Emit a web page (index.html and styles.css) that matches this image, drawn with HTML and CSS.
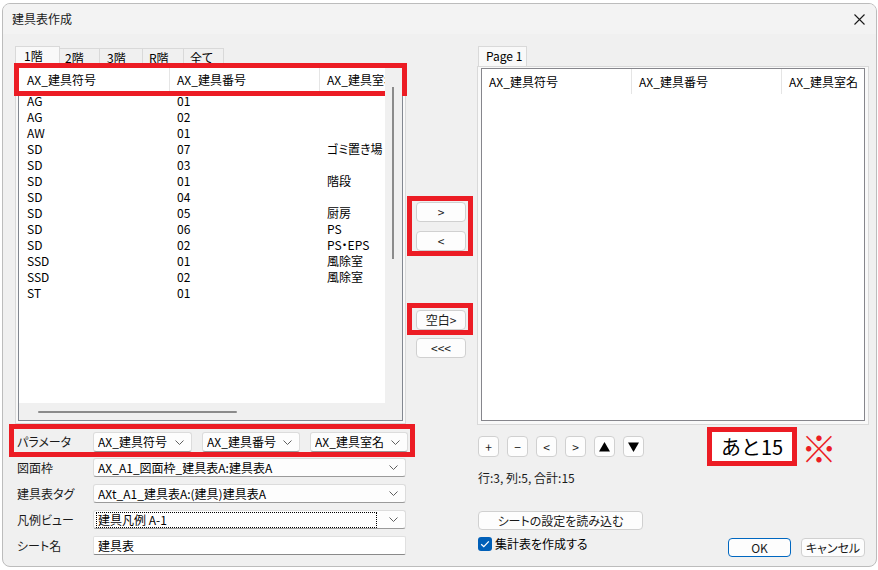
FILE: index.html
```html
<!DOCTYPE html>
<html lang="ja">
<head>
<meta charset="utf-8">
<title>建具表作成</title>
<link rel="stylesheet" href="styles.css">
</head>
<body>
<div class="dialog">
  <div class="titlebar">
    <span class="title">建具表作成</span>
    <svg class="close" width="11" height="11" viewBox="0 0 11 11"><path d="M0.5 0.5L10.5 10.5M10.5 0.5L0.5 10.5" stroke="#1a1a1a" stroke-width="1.1" fill="none"/></svg>
  </div>
  <div class="main">
    <div class="leftcol">
      <div class="tabs">
        <div class="tab active t1">1階</div>
        <div class="tab t2">2階</div>
        <div class="tab t3">3階</div>
        <div class="tab t4">R階</div>
        <div class="tab t5">全て</div>
      </div>
      <div class="panel lpanel">
        <div class="list llist">
          <div class="lhead">
            <div class="hcell">AX_建具符号</div>
            <div class="hcell">AX_建具番号</div>
            <div class="hcell clip">AX_建具室名</div>
            <div class="hgap"><div class="vthumb top"></div></div>
          </div>
          <div class="lbody">
            <div class="row"><span>AG</span><span>01</span><span></span></div>
            <div class="row"><span>AG</span><span>02</span><span></span></div>
            <div class="row"><span>AW</span><span>01</span><span></span></div>
            <div class="row"><span>SD</span><span>07</span><span>ゴミ置き場</span></div>
            <div class="row"><span>SD</span><span>03</span><span></span></div>
            <div class="row"><span>SD</span><span>01</span><span>階段</span></div>
            <div class="row"><span>SD</span><span>04</span><span></span></div>
            <div class="row"><span>SD</span><span>05</span><span>厨房</span></div>
            <div class="row"><span>SD</span><span>06</span><span>PS</span></div>
            <div class="row"><span>SD</span><span>02</span><span>PS・EPS</span></div>
            <div class="row"><span>SSD</span><span>01</span><span>風除室</span></div>
            <div class="row"><span>SSD</span><span>02</span><span>風除室</span></div>
            <div class="row"><span>ST</span><span>01</span><span></span></div>
          </div>
          <div class="vscroll"><div class="vthumb"></div></div>
          <div class="hscroll"><div class="hthumb"></div></div>
          <div class="corner"></div>
        </div>
      </div>
      <div class="params">
        <span class="flabel">パラメータ</span>
        <div class="combo w99"><span class="cval">AX_建具符号</span><svg class="chev" width="9" height="5" viewBox="0 0 9 5"><path d="M0.5 0.5L4.5 4.5L8.5 0.5" stroke="#5f5f5f" fill="none"/></svg></div>
        <div class="combo w98 gap"><span class="cval">AX_建具番号</span><svg class="chev" width="9" height="5" viewBox="0 0 9 5"><path d="M0.5 0.5L4.5 4.5L8.5 0.5" stroke="#5f5f5f" fill="none"/></svg></div>
        <div class="combo w98 gap"><span class="cval">AX_建具室名</span><svg class="chev" width="9" height="5" viewBox="0 0 9 5"><path d="M0.5 0.5L4.5 4.5L8.5 0.5" stroke="#5f5f5f" fill="none"/></svg></div>
      </div>
      <div class="frow first">
        <span class="flabel">図面枠</span>
        <div class="combo wide"><span class="cval">AX_A1_図面枠_建具表A:建具表A</span><svg class="chev" width="9" height="5" viewBox="0 0 9 5"><path d="M0.5 0.5L4.5 4.5L8.5 0.5" stroke="#5f5f5f" fill="none"/></svg></div>
      </div>
      <div class="frow">
        <span class="flabel">建具表タグ</span>
        <div class="combo wide"><span class="cval">AXt_A1_建具表A:(建具)建具表A</span><svg class="chev" width="9" height="5" viewBox="0 0 9 5"><path d="M0.5 0.5L4.5 4.5L8.5 0.5" stroke="#5f5f5f" fill="none"/></svg></div>
      </div>
      <div class="frow">
        <span class="flabel">凡例ビュー</span>
        <div class="combo wide"><span class="cval focus">建具凡例 A-1</span><svg class="chev" width="9" height="5" viewBox="0 0 9 5"><path d="M0.5 0.5L4.5 4.5L8.5 0.5" stroke="#5f5f5f" fill="none"/></svg></div>
      </div>
      <div class="frow">
        <span class="flabel">シート名</span>
        <div class="input wide">建具表</div>
      </div>
    </div>

    <div class="midcol">
      <div class="annbox box1">
        <div class="btn mbtn">&gt;</div>
        <div class="btn mbtn second">&lt;</div>
      </div>
      <div class="annbox box2">
        <div class="btn mbtn">空白&gt;</div>
      </div>
      <div class="btn mbtn loose">&lt;&lt;&lt;</div>
    </div>

    <div class="rightcol">
      <div class="rtabs">
        <div class="tab active rtab">Page 1</div>
      </div>
      <div class="panel rpanel">
        <div class="list rlist">
          <div class="rhead">
            <div class="hcell">AX_建具符号</div>
            <div class="hcell">AX_建具番号</div>
            <div class="hcell last">AX_建具室名</div>
          </div>
        </div>
      </div>
      <div class="tools">
        <div class="btn sbtn">+</div>
        <div class="btn sbtn">−</div>
        <div class="btn sbtn">&lt;</div>
        <div class="btn sbtn">&gt;</div>
        <div class="btn sbtn"><svg width="11" height="10" viewBox="0 0 11 10"><polygon points="0,9.5 5.5,0 11,9.5" fill="#000"/></svg></div>
        <div class="btn sbtn"><svg width="11" height="10" viewBox="0 0 11 10"><polygon points="0,0.5 11,0.5 5.5,10" fill="#000"/></svg></div>
        <div class="remain">あと15</div>
        <div class="mark">※</div>
      </div>
      <div class="status">行:3, 列:5, 合計:15</div>
      <div class="btn loadbtn">シートの設定を読み込む</div>
      <div class="bottomrow">
        <div class="check"><svg width="14" height="14" viewBox="0 0 14 14"><path d="M3.2 7.2L5.8 9.7L10.8 4.4" stroke="#fff" stroke-width="1.3" fill="none"/></svg></div>
        <span class="checklabel">集計表を作成する</span>
        <div class="btn okbtn">OK</div>
        <div class="btn cancelbtn">キャンセル</div>
      </div>
    </div>
  </div>
</div>
</body>
</html>
```
FILE: styles.css
```css
* { box-sizing: border-box; margin: 0; padding: 0; }
html, body { width: 878px; height: 570px; overflow: hidden; }
body {
  background: #ffffff;
  padding: 3px 1px 0 2px;
  font-family: "Noto Sans CJK JP", "Noto Sans", sans-serif;
  font-size: 12px;
  line-height: 16px;
  color: #000;
  font-feature-settings: "palt" 1;
}
.dialog {
  width: 875px;
  height: 564px;
  border: 1px solid #bcbcbc;
  border-radius: 8px;
  background: #f0f0f0;
  display: flex;
  flex-direction: column;
  overflow: hidden;
}
.titlebar {
  flex: none;
  height: 30px;
  background: #f3f3f3;
  display: flex;
  align-items: center;
  justify-content: space-between;
  padding: 0 11px 0 9px;
}
.title { font-size: 12px; line-height: 16px; color: #1a1a1a; }
.main { display: flex; padding: 12px 0 0 12px; flex: 1; }
.leftcol { width: 391px; display: flex; flex-direction: column; }
.midcol { width: 71px; display: flex; flex-direction: column; padding-top: 150px; }
.rightcol { width: 392px; display: flex; flex-direction: column; }

/* tabs */
.tabs { height: 20px; display: flex; align-items: flex-end; }
.tab {
  height: 18px;
  border: 1px solid #d9d9d9;
  border-bottom: none;
  background: #f0f0f0;
  line-height: 17px;
  white-space: nowrap;
}
.tab + .tab { border-left: none; }
.tab.active { height: 20px; background: #f9f9f9; line-height: 18px; }
.t1 { width: 45px; padding-left: 8px; }
.t2 { width: 40px; padding-left: 5px; }
.t3 { width: 43px; padding-left: 7px; }
.t4 { width: 41px; padding-left: 6px; }
.t5 { width: 40px; padding-left: 6px; }

/* panels and lists */
.panel { border: 1px solid #d9d9d9; background: #f9f9f9; }
.lpanel { height: 358px; padding: 0 2px 2px 2px; }
.list { border: 1px solid #828790; background: #fff; }
.llist {
  height: 354px;
  display: grid;
  grid-template-columns: 1fr 17px;
  grid-template-rows: 23px 1fr 17px;
}
.lhead {
  grid-column: 1 / 3;
  display: flex;
  padding-left: 1px;
  outline: 5px solid #ec1c24;
}
.hcell {
  width: 150px;
  flex: none;
  padding-left: 7px;
  line-height: 23px;
  border-right: 1px solid #e5e5e5;
  white-space: nowrap;
  overflow: hidden;
}
.hcell.clip { width: 65px; border-right: none; }
.hgap { width: 17px; flex: none; background: #f0f0f0; padding-top: 19px; }
.lbody { padding: 2px 0 0 1px; overflow: hidden; }
.row { display: flex; height: 16px; line-height: 16px; white-space: nowrap; }
.row span { width: 150px; flex: none; padding-left: 7px; overflow: hidden; }
.row span:last-child { width: 65px; }
.vscroll { background: #f0f0f0; }
.vthumb { width: 2px; height: 168px; margin-left: 7px; background: #8b8b8b; }
.vthumb.top { height: 4px; }
.hscroll { background: #f0f0f0; padding-top: 8px; }
.hthumb { width: 199px; height: 2px; margin-left: 19px; background: #8b8b8b; border-radius: 1px; }
.corner { background: #f0f0f0; }

.rtabs { height: 20px; display: flex; padding-left: 1px; }
.rtab { width: 49px; padding-left: 7px; }
.rpanel { height: 359px; padding: 1px 3px 3px 3px; }
.rlist { height: 353px; border-color: #86868c; }
.rhead { display: flex; height: 25px; }
.rhead .hcell { line-height: 25px; }
.rhead .hcell.last { width: 82px; border-right: none; }

/* form rows */
.params {
  display: flex;
  align-items: center;
  width: 406px;
  height: 33px;
  margin-left: -6px;
  border: 5px solid #ec1c24;
  padding: 3px 2px 0 3px;
}
.params .combo { height: 20px; }
.flabel { width: 76px; flex: none; white-space: nowrap; color: #1a1a1a; }
.combo {
  display: flex;
  align-items: center;
  height: 19px;
  background: #fdfdfd;
  border: 1px solid #dcdcdc;
  border-bottom-color: #9a9a9a;
  border-radius: 3px;
  padding: 0 7px 0 4px;
  white-space: nowrap;
}
.w99 { width: 99px; }
.w98 { width: 98px; }
.gap { margin-left: 10px; }
.wide { width: 315px; }
.cval { flex: 1; overflow: hidden; line-height: 16px; }
.cval.focus {
  border: 1px dotted #000;
  line-height: 14px;
  margin: 0 12px 0 -2px;
  padding-left: 1px;
}
.chev { flex: none; }
.frow { display: flex; align-items: center; height: 19px; margin-top: 7px; padding-left: 2px; }
.frow.first { margin-top: 1px; }
.input {
  height: 19px;
  background: #fff;
  border: 1px solid #e0e0e0;
  border-bottom-color: #8a8a8a;
  border-radius: 2px;
  padding-left: 4px;
  line-height: 17px;
}

/* buttons */
.btn {
  background: #fdfdfd;
  border: 1px solid #d0d0d0;
  border-radius: 4px;
  display: flex;
  align-items: center;
  justify-content: center;
  white-space: nowrap;
  color: #1a1a1a;
}
.annbox { border: 5px solid #ec1c24; width: 66px; margin-left: 1px; }
.box1 { padding: 1px 2px 0 4px; }
.box2 { margin-top: 47px; padding: 2px 2px 0 4px; }
.mbtn { width: 50px; height: 20px; }
.mbtn.second { margin-top: 9px; }
.mbtn.loose { margin: 3px 0 0 10px; }

.tools { display: flex; align-items: center; height: 39px; margin-top: 2px; padding-left: 1px; }
.sbtn { width: 21px; height: 21px; margin-right: 8px; flex: none; font-size: 12px; }
.remain {
  margin-left: 55px;
  width: 90px;
  height: 39px;
  border: 5px solid #ec1c24;
  background: #fff;
  font-size: 20px;
  line-height: 24px;
  display: flex;
  align-items: center;
  justify-content: center;
  flex: none;
  font-feature-settings: normal;
}
.mark { margin-left: 4px; font-size: 36px; line-height: 38px; color: #ec1c24; font-feature-settings: normal; }
.status { margin-top: 4px; padding-left: 1px; height: 16px; line-height: 16px; color: #1a1a1a; }
.loadbtn { margin: 25px 0 0 1px; width: 165px; height: 19px; }
.bottomrow { display: flex; align-items: flex-start; margin-top: 7px; padding-left: 1px; }
.check { width: 14px; height: 14px; background: #005fb8; border-radius: 3px; flex: none; display: flex; }
.checklabel { margin-left: 3px; line-height: 14px; }
.okbtn { margin: 1px 0 0 auto; width: 63px; height: 19px; border-color: #0067c0; }
.cancelbtn { margin: 1px 4px 0 10px; width: 64px; height: 19px; }
```
